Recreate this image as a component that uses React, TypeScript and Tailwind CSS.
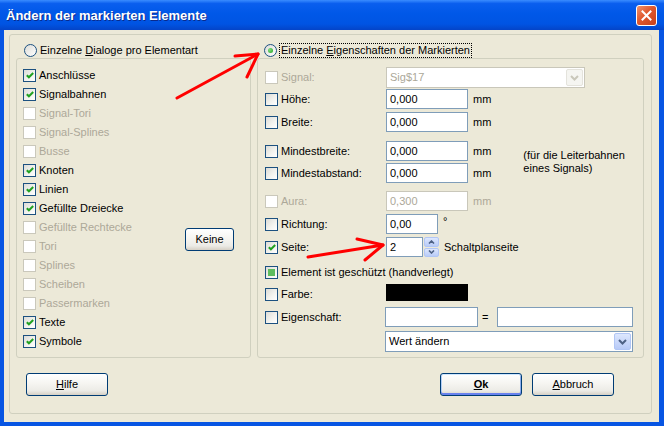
import React from "react";

type BoxProps = { checked?: boolean; disabled?: boolean; mixed?: boolean };

function Box({ checked, disabled, mixed }: BoxProps) {
  return (
    <span
      className={`w-[13px] h-[13px] shrink-0 border flex items-center justify-center ${
        disabled
          ? "border-[#CAC8BB] bg-white"
          : "border-[#1C5180] bg-[linear-gradient(135deg,#DCDCD7_0%,#F4F4F0_60%,#FFFFFF_100%)]"
      }`}
    >
      {checked && (
        <svg width="8" height="7" viewBox="0 0 8 7">
          <path d="M0.8 3.2 L2.9 5.3 L7.2 1" stroke="#21A121" strokeWidth="2" fill="none" />
        </svg>
      )}
      {mixed && <span className="w-[7px] h-[7px] bg-[#5FBD5F]" />}
    </span>
  );
}

function Radio({ on }: { on?: boolean }) {
  return (
    <span className="w-[13px] h-[13px] shrink-0 rounded-full border border-[#1C5180] bg-[linear-gradient(135deg,#DCDCD7_0%,#FFFFFF_100%)] flex items-center justify-center">
      {on && <span className="w-[5px] h-[5px] rounded-full bg-[radial-gradient(circle_at_35%_35%,#7FE07F,#21A121)]" />}
    </span>
  );
}

function Field({ value, w, disabled }: { value: string; w: string; disabled?: boolean }) {
  return (
    <div
      className={`${w} h-[20px] shrink-0 border bg-white flex items-center pl-[3px] ${
        disabled ? "border-[#C9C7BA] text-[#ACA899]" : "border-[#7F9DB9]"
      }`}
    >
      {value}
    </div>
  );
}

function Combo({ value, w, disabled }: { value: string; w: string; disabled?: boolean }) {
  return (
    <div
      className={`${w} h-[21px] shrink-0 border bg-white flex items-center p-[1px] ${
        disabled ? "border-[#C9C7BA]" : "border-[#7F9DB9]"
      }`}
    >
      <span className={`flex-1 pl-[2px] ${disabled ? "text-[#ACA899]" : ""}`}>{value}</span>
      <span
        className={`w-[17px] h-full rounded-[2px] border flex items-center justify-center ${
          disabled
            ? "border-[#E4E3DC] bg-[#F5F5F1]"
            : "border-[#B1C6F5] bg-[linear-gradient(180deg,#DDE7FE,#B7CAF7)]"
        }`}
      >
        <svg width="9" height="6" viewBox="0 0 9 6">
          <path d="M1 1 L4.5 4.5 L8 1" stroke={disabled ? "#C9C7BA" : "#4D6185"} strokeWidth="2" fill="none" />
        </svg>
      </span>
    </div>
  );
}

function XpButton({ children, w, def }: { children: React.ReactNode; w: string; def?: boolean }) {
  return (
    <div
      className={`${w} h-[23px] shrink-0 border border-[#003C74] rounded-[3px] bg-[linear-gradient(180deg,#FFFFFF_0%,#F6F5F1_45%,#ECEBE6_80%,#D6D0C5_100%)] flex items-center justify-center ${
        def ? "shadow-[inset_0_1px_0_#CEE7FF,inset_0_-2px_0_#6982EE,inset_1px_0_0_#B4CFF6,inset_-1px_0_0_#8DAEEB]" : ""
      }`}
    >
      {children}
    </div>
  );
}

const leftItems: { label: string; on?: boolean; off?: boolean }[] = [
  { label: "Anschlüsse", on: true },
  { label: "Signalbahnen", on: true },
  { label: "Signal-Tori", off: true },
  { label: "Signal-Splines", off: true },
  { label: "Busse", off: true },
  { label: "Knoten", on: true },
  { label: "Linien", on: true },
  { label: "Gefüllte Dreiecke", on: true },
  { label: "Gefüllte Rechtecke", off: true },
  { label: "Tori", off: true },
  { label: "Splines", off: true },
  { label: "Scheiben", off: true },
  { label: "Passermarken", off: true },
  { label: "Texte", on: true },
  { label: "Symbole", on: true },
];

function Lbl({ label, checked, disabled, w = "w-[121px]" }: { label: string; checked?: boolean; disabled?: boolean; w?: string }) {
  return (
    <div className={`${w} shrink-0 flex items-center gap-[3px]`}>
      <Box checked={checked} disabled={disabled} />
      <span className={disabled ? "text-[#ACA899]" : ""}>{label}</span>
    </div>
  );
}

export default function App() {
  return (
    <div className="relative w-[664px] h-[426px] flex flex-col font-['Liberation_Sans',Arial,sans-serif] text-[11px] text-black leading-none">
      {/* title bar */}
      <div className="h-[30px] shrink-0 flex items-center justify-between pl-[6px] pr-[7px] bg-[linear-gradient(180deg,#3A8CFF_0%,#0A5EEE_12%,#0058E8_45%,#0054E3_80%,#0444C8_100%)]">
        <span className="text-white font-bold text-[13px] [text-shadow:1px_1px_0_#0A2A8C]">Ändern der markierten Elemente</span>
        <div className="w-[21px] h-[21px] rounded-[3px] border border-white bg-[linear-gradient(135deg,#F0936C_0%,#E0582E_45%,#C8401A_100%)] flex items-center justify-center">
          <svg width="11" height="11" viewBox="0 0 11 11">
            <path d="M1.5 1.5 L9.5 9.5 M9.5 1.5 L1.5 9.5" stroke="white" strokeWidth="2" strokeLinecap="square" />
          </svg>
        </div>
      </div>

      {/* window body with blue frame */}
      <div className="flex-1 flex bg-[#0755E3] pl-[4px] pr-[5px] pb-[4px]">
        <div className="flex-1 bg-[#ECE9D8] pt-[4px] pl-[5px] pb-[8px]">
          <div className="w-[643px] h-[380px] border border-[#D0D0BF] rounded-[3px] flex flex-col pt-[7px] pl-[6px]">
            <div className="flex gap-[6px]">
              {/* left column */}
              <div className="w-[235px] flex flex-col">
                <div className="h-[16px] flex items-center gap-[3px] pl-[8px]">
                  <Radio />
                  <span>
                    Einzelne <u>D</u>ialoge pro Elementart
                  </span>
                </div>
                <div className="h-[300px] border border-[#D0D0BF] rounded-[3px] flex pt-[7px] pl-[6px]">
                  <div className="w-[162px] flex flex-col">
                    {leftItems.map((it) => (
                      <div key={it.label} className="h-[19px] flex items-center gap-[3px]">
                        <Box checked={it.on} disabled={it.off} />
                        <span className={it.off ? "text-[#ACA899]" : ""}>{it.label}</span>
                      </div>
                    ))}
                  </div>
                  <div className="pt-[162px]">
                    <XpButton w="w-[49px]">Keine</XpButton>
                  </div>
                </div>
              </div>

              {/* right column */}
              <div className="w-[387px] flex flex-col">
                <div className="h-[16px] flex items-center gap-[2px] pl-[7px]">
                  <Radio on />
                  <span className="border border-dotted border-black px-[1px] py-[1px]">
                    Einzelne <u>E</u>igenschaften der Markierten
                  </span>
                </div>
                <div className="h-[300px] border border-[#D0D0BF] rounded-[3px] flex flex-col pl-[7px]">
                  <div className="h-[21px] mt-[8px] flex items-center">
                    <Lbl label="Signal:" disabled />
                    <Combo value="Sig$17" w="w-[199px]" disabled />
                  </div>
                  <div className="h-[20px] mt-[1px] flex items-center">
                    <Lbl label="Höhe:" />
                    <Field value="0,000" w="w-[82px]" />
                    <span className="ml-[5px]">mm</span>
                  </div>
                  <div className="h-[20px] mt-[3px] flex items-center">
                    <Lbl label="Breite:" />
                    <Field value="0,000" w="w-[82px]" />
                    <span className="ml-[5px]">mm</span>
                  </div>
                  <div className="flex mt-[9px]">
                    <div className="flex flex-col">
                      <div className="h-[20px] flex items-center">
                        <Lbl label="Mindestbreite:" />
                        <Field value="0,000" w="w-[82px]" />
                        <span className="ml-[5px]">mm</span>
                      </div>
                      <div className="h-[20px] mt-[2px] flex items-center">
                        <Lbl label="Mindestabstand:" />
                        <Field value="0,000" w="w-[82px]" />
                        <span className="ml-[5px]">mm</span>
                      </div>
                    </div>
                    <div className="ml-[32px] pt-[8px] leading-[13px]">
                      (für die Leiterbahnen
                      <br />
                      eines Signals)
                    </div>
                  </div>
                  <div className="h-[20px] mt-[8px] flex items-center">
                    <Lbl label="Aura:" disabled />
                    <Field value="0,300" w="w-[82px]" disabled />
                    <span className="ml-[5px] text-[#ACA899]">mm</span>
                  </div>
                  <div className="h-[20px] mt-[3px] flex items-center">
                    <Lbl label="Richtung:" />
                    <Field value="0,00" w="w-[52px]" />
                    <span className="ml-[5px] self-start mt-[2px]">°</span>
                  </div>
                  <div className="h-[20px] mt-[3px] flex items-center">
                    <Lbl label="Seite:" checked />
                    <Field value="2" w="w-[37px]" />
                    <div className="ml-[1px] w-[15px] h-[20px] flex flex-col gap-px">
                      <span className="flex-1 rounded-[2px] border border-[#B1C6F5] bg-[linear-gradient(180deg,#DDE7FE,#B9CCF8)] flex items-center justify-center">
                        <svg width="7" height="4" viewBox="0 0 7 4">
                          <path d="M1 3.5 L3.5 1 L6 3.5" stroke="#4D6185" strokeWidth="1.6" fill="none" />
                        </svg>
                      </span>
                      <span className="flex-1 rounded-[2px] border border-[#B1C6F5] bg-[linear-gradient(180deg,#DDE7FE,#B9CCF8)] flex items-center justify-center">
                        <svg width="7" height="4" viewBox="0 0 7 4">
                          <path d="M1 0.5 L3.5 3 L6 0.5" stroke="#4D6185" strokeWidth="1.6" fill="none" />
                        </svg>
                      </span>
                    </div>
                    <span className="ml-[5px]">Schaltplanseite</span>
                  </div>
                  <div className="h-[20px] mt-[5px] flex items-center gap-[3px]">
                    <Box mixed />
                    <span>Element ist geschützt (handverlegt)</span>
                  </div>
                  <div className="h-[20px] mt-[2px] flex items-center">
                    <Lbl label="Farbe:" />
                    <div className="w-[82px] h-[17px] self-start bg-black" />
                  </div>
                  <div className="h-[20px] mt-[3px] flex items-center">
                    <Lbl label="Eigenschaft:" w="w-[120px]" />
                    <Field value="" w="w-[93px]" />
                    <span className="ml-[4px]">=</span>
                    <span className="ml-[9px]">
                      <Field value="" w="w-[136px]" />
                    </span>
                  </div>
                  <div className="mt-[4px] pl-[120px]">
                    <Combo value="Wert ändern" w="w-[248px]" />
                  </div>
                </div>
              </div>
            </div>

            {/* buttons */}
            <div className="mt-[15px] flex items-center pl-[10px]">
              <XpButton w="w-[82px]">
                <span>
                  <u>H</u>ilfe
                </span>
              </XpButton>
              <div className="flex-1" />
              <XpButton w="w-[82px]" def>
                <span className="font-bold">
                  <u>O</u>k
                </span>
              </XpButton>
              <div className="w-[10px]" />
              <XpButton w="w-[82px]">
                <span>
                  <u>A</u>bbruch
                </span>
              </XpButton>
              <div className="w-[37px]" />
            </div>
          </div>
        </div>
      </div>

      {/* red annotation arrows */}
      <svg className="absolute inset-0 pointer-events-none" width="664" height="426" viewBox="0 0 664 426">
        <g stroke="#FF0000" strokeWidth="3" fill="none" strokeLinecap="round" strokeLinejoin="round">
          <path d="M177 98 L258 54" />
          <path d="M235 56 L258 54 L247 77" />
          <path d="M308 257 L383 245" />
          <path d="M357 239 L383 245 L365 260" />
        </g>
      </svg>
    </div>
  );
}
